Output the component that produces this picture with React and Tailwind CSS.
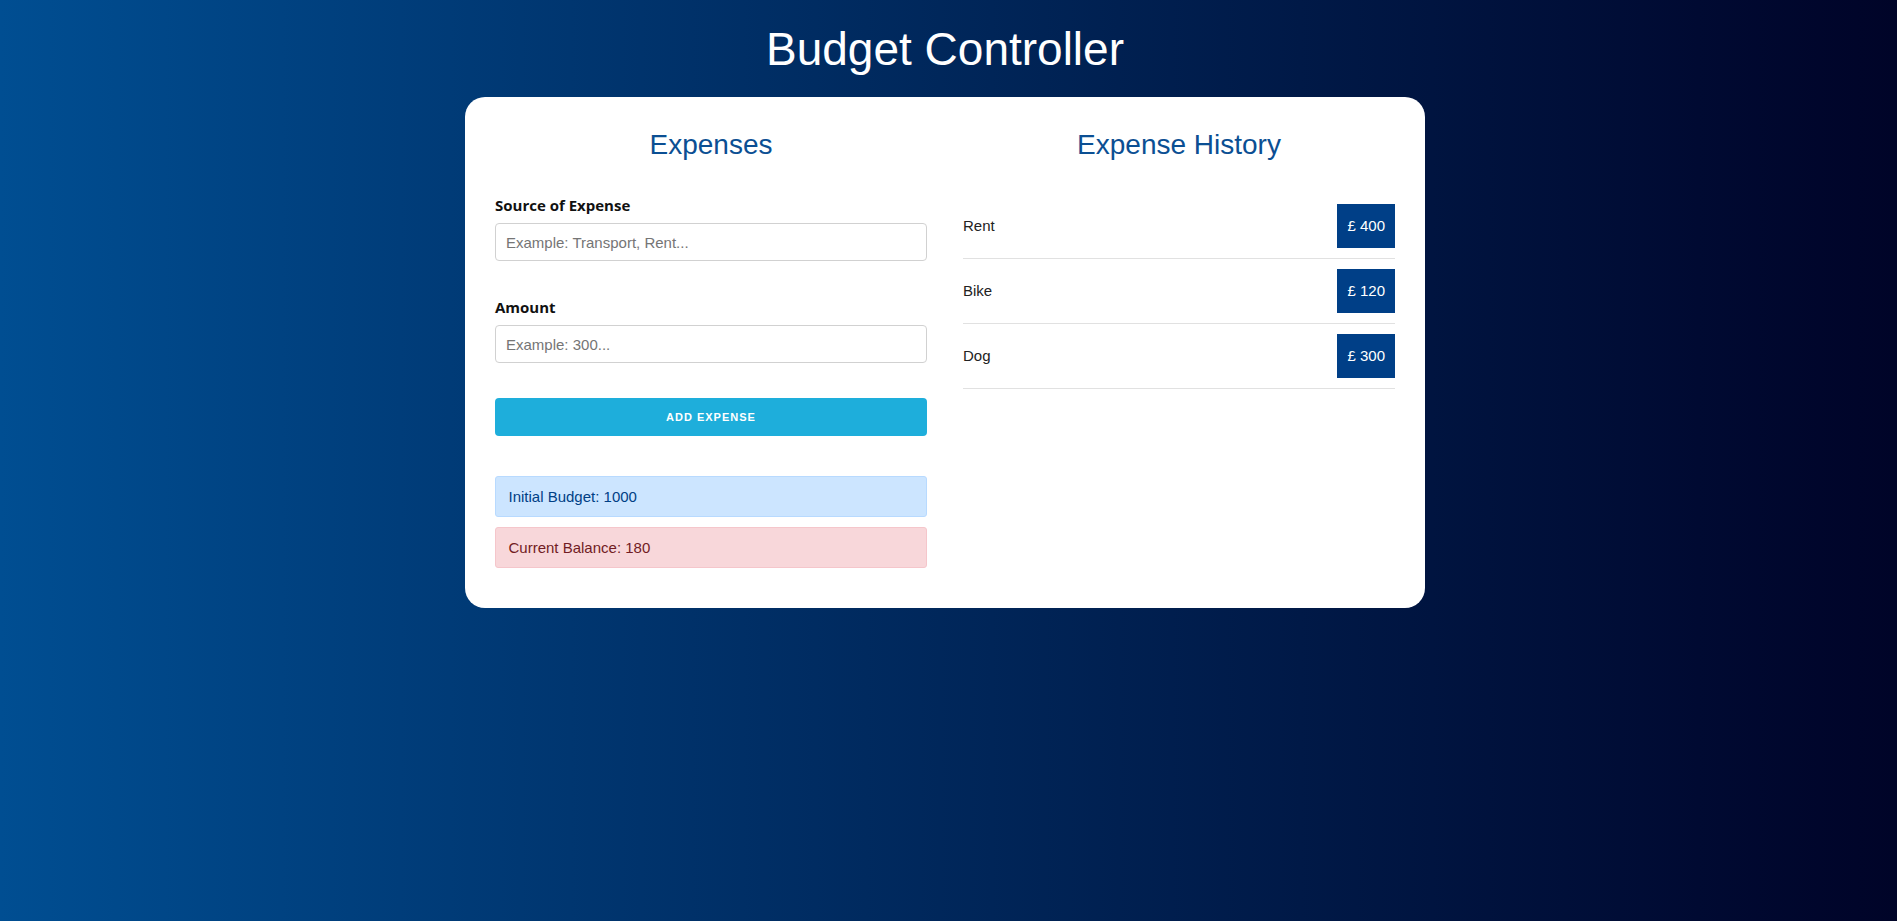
import React, { useState } from "react";

const expenses = [
  { name: "Rent", amount: 400 },
  { name: "Bike", amount: 120 },
  { name: "Dog", amount: 300 },
];

const App = () => {
  const [source, setSource] = useState("");
  const [amount, setAmount] = useState("");
  const initialBudget = 1000;
  const spent = expenses.reduce((sum, e) => sum + e.amount, 0);

  return (
    <div
      className="min-h-screen bg-gradient-to-r from-[#004e92] to-[#000428] pr-[7px] text-[15px] text-[#222]"
      style={{ fontFamily: '"Liberation Sans", Arial, sans-serif' }}
    >
      <h1 className="pt-[22px] pb-[20px] text-center text-[46px] leading-[55px] font-normal text-white">
        Budget Controller
      </h1>

      <div className="mx-auto grid w-[960px] grid-cols-2 gap-[36px] rounded-[20px] bg-white p-[30px]">
        {/* left: form */}
        <div>
          <h2 className="text-center text-[28px] leading-[36px] text-[#0b4f93]">Expenses</h2>

          <label
            className="mt-[32px] mb-[8px] block text-[15px] leading-[20px] font-bold text-[#111]"
            style={{ fontFamily: '"Open Sans", "Noto Sans", sans-serif' }}
          >
            Source of Expense
          </label>
          <input
            value={source}
            onChange={(e) => setSource(e.target.value)}
            placeholder="Example: Transport, Rent..."
            className="block h-[38px] w-full rounded-[4px] border border-[#d1d1d1] px-[10px] text-[15px] placeholder:text-[#757575] outline-none"
          />

          <label
            className="mt-[36px] mb-[8px] block text-[15px] leading-[20px] font-bold text-[#111]"
            style={{ fontFamily: '"Open Sans", "Noto Sans", sans-serif' }}
          >
            Amount
          </label>
          <input
            value={amount}
            onChange={(e) => setAmount(e.target.value)}
            placeholder="Example: 300..."
            className="block h-[38px] w-full rounded-[4px] border border-[#d1d1d1] px-[10px] text-[15px] placeholder:text-[#757575] outline-none"
          />

          <button className="mt-[35px] block h-[38px] w-full rounded-[4px] bg-[#1eaedb] text-[11px] font-bold tracking-[1px] text-white uppercase">
            Add Expense
          </button>

          <div className="mt-[40px] rounded-[3px] border border-[#b8daff] bg-[#cce5ff] px-[12.5px] py-[7.5px] leading-[24px] text-[#004085]">
            Initial Budget: {initialBudget}
          </div>
          <div className="mt-[10px] mb-[10px] rounded-[3px] border border-[#f5c6cb] bg-[#f8d7da] px-[12.5px] py-[7.5px] leading-[24px] text-[#721c24]">
            Current Balance: {initialBudget - spent}
          </div>
        </div>

        {/* right: history */}
        <div>
          <h2 className="text-center text-[28px] leading-[36px] text-[#0b4f93]">Expense History</h2>
          <ul className="mt-[31px]">
            {expenses.map((e) => (
              <li
                key={e.name}
                className="flex items-center justify-between border-b border-[#e1e1e1] py-[10px]"
              >
                <span>{e.name}</span>
                <span className="bg-[#003f87] px-[10px] py-[10px] leading-[24px] text-white">
                  £ {e.amount}
                </span>
              </li>
            ))}
          </ul>
        </div>
      </div>
    </div>
  );
};

export default App;
